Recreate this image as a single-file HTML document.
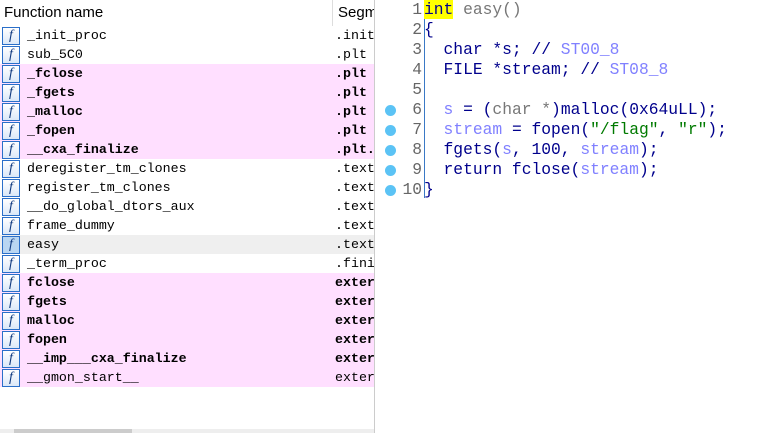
<!DOCTYPE html><html><head><style>
body{margin:0;width:779px;height:433px;overflow:hidden;background:#fff;position:relative;font-family:"Liberation Sans",sans-serif}
#l{position:absolute;left:0;top:0;width:374px;height:433px;border-right:1px solid #ccc;overflow:hidden}
.hd{position:absolute;top:0;left:0;width:374px;height:26px;font-size:15px;line-height:26px}
.hd span{position:absolute;top:0}
.row{position:absolute;left:0;width:374px;height:19px;font-family:"Liberation Mono",monospace;font-size:13.3px;line-height:20px;white-space:pre}
.row .n{position:absolute;left:27px}.row .s{position:absolute;left:335px}
.ic{position:absolute;left:2px;top:1px;width:16px;height:16px;border:1px solid #2a6fc9;background:linear-gradient(#fff,#dbe8f8);font:italic 14px "Liberation Serif",serif;color:#113a80;text-align:center;line-height:16px}
.p{background:#ffdfff}.b{font-weight:bold}.g{background:#efefef}
#c{position:absolute;left:376px;top:0;width:403px;height:433px}
.vl{position:absolute;left:48px;top:0;width:1px;height:198px;background:#3a79c6}
.cl{position:absolute;left:0;height:20px;font-family:"Liberation Mono",monospace;font-size:16.3px;line-height:20px;white-space:pre;color:#00008c}
.ln{position:absolute;left:0;width:46px;text-align:right;color:#666}
.dot{position:absolute;left:9px;top:5px;width:11px;height:11px;border-radius:50%;background:#5bc3f5}
.t{position:absolute;left:48px}
.gr{color:#8080ff}.st{color:#007a00}.gy{color:#777}
</style></head><body>
<div id="l">
<div class="hd"><span style="left:4px">Function name</span><span style="left:332px;border-left:1px solid #ddd;padding-left:5px;height:26px">Segm</span></div>
<div class="row" style="top:26px"><div class="ic">f</div><span class="n">_init_proc</span><span class="s">.init</span></div>
<div class="row" style="top:45px"><div class="ic">f</div><span class="n">sub_5C0</span><span class="s">.plt</span></div>
<div class="row p b" style="top:64px"><div class="ic">f</div><span class="n">_fclose</span><span class="s">.plt</span></div>
<div class="row p b" style="top:83px"><div class="ic">f</div><span class="n">_fgets</span><span class="s">.plt</span></div>
<div class="row p b" style="top:102px"><div class="ic">f</div><span class="n">_malloc</span><span class="s">.plt</span></div>
<div class="row p b" style="top:121px"><div class="ic">f</div><span class="n">_fopen</span><span class="s">.plt</span></div>
<div class="row p b" style="top:140px"><div class="ic">f</div><span class="n">__cxa_finalize</span><span class="s">.plt.</span></div>
<div class="row" style="top:159px"><div class="ic">f</div><span class="n">deregister_tm_clones</span><span class="s">.text</span></div>
<div class="row" style="top:178px"><div class="ic">f</div><span class="n">register_tm_clones</span><span class="s">.text</span></div>
<div class="row" style="top:197px"><div class="ic">f</div><span class="n">__do_global_dtors_aux</span><span class="s">.text</span></div>
<div class="row" style="top:216px"><div class="ic">f</div><span class="n">frame_dummy</span><span class="s">.text</span></div>
<div class="row g" style="top:235px"><div class="ic" style="background:#b9d6f2">f</div><span class="n">easy</span><span class="s">.text</span></div>
<div class="row" style="top:254px"><div class="ic">f</div><span class="n">_term_proc</span><span class="s">.fini</span></div>
<div class="row p b" style="top:273px"><div class="ic">f</div><span class="n">fclose</span><span class="s">exter</span></div>
<div class="row p b" style="top:292px"><div class="ic">f</div><span class="n">fgets</span><span class="s">exter</span></div>
<div class="row p b" style="top:311px"><div class="ic">f</div><span class="n">malloc</span><span class="s">exter</span></div>
<div class="row p b" style="top:330px"><div class="ic">f</div><span class="n">fopen</span><span class="s">exter</span></div>
<div class="row p b" style="top:349px"><div class="ic">f</div><span class="n">__imp___cxa_finalize</span><span class="s">exter</span></div>
<div class="row p" style="top:368px"><div class="ic">f</div><span class="n">__gmon_start__</span><span class="s">exter</span></div>
<div style="position:absolute;left:0;top:429px;width:374px;height:4px;background:#eee"></div>
<div style="position:absolute;left:14px;top:429px;width:118px;height:4px;background:#ccc"></div>
</div>
<div id="c">
<div class="vl"></div>
<div class="cl" style="top:0"><span class="ln">1</span><span class="t"><span style="background:#ff0">int</span><span class="gy"> easy()</span></span></div>
<div class="cl" style="top:20px"><span class="ln">2</span><span class="t">{</span></div>
<div class="cl" style="top:40px"><span class="ln">3</span><span class="t">  char *s; // <span class="gr">ST00_8</span></span></div>
<div class="cl" style="top:60px"><span class="ln">4</span><span class="t">  FILE *stream; // <span class="gr">ST08_8</span></span></div>
<div class="cl" style="top:80px"><span class="ln">5</span></div>
<div class="cl" style="top:100px"><div class="dot"></div><span class="ln">6</span><span class="t">  <span class="gr">s</span> = (<span class="gy">char *</span>)malloc(0x64uLL);</span></div>
<div class="cl" style="top:120px"><div class="dot"></div><span class="ln">7</span><span class="t">  <span class="gr">stream</span> = fopen(<span class="st">"/flag"</span>, <span class="st">"r"</span>);</span></div>
<div class="cl" style="top:140px"><div class="dot"></div><span class="ln">8</span><span class="t">  fgets(<span class="gr">s</span>, 100, <span class="gr">stream</span>);</span></div>
<div class="cl" style="top:160px"><div class="dot"></div><span class="ln">9</span><span class="t">  return fclose(<span class="gr">stream</span>);</span></div>
<div class="cl" style="top:180px"><div class="dot"></div><span class="ln">10</span><span class="t">}</span></div>
</div>
</body></html>
